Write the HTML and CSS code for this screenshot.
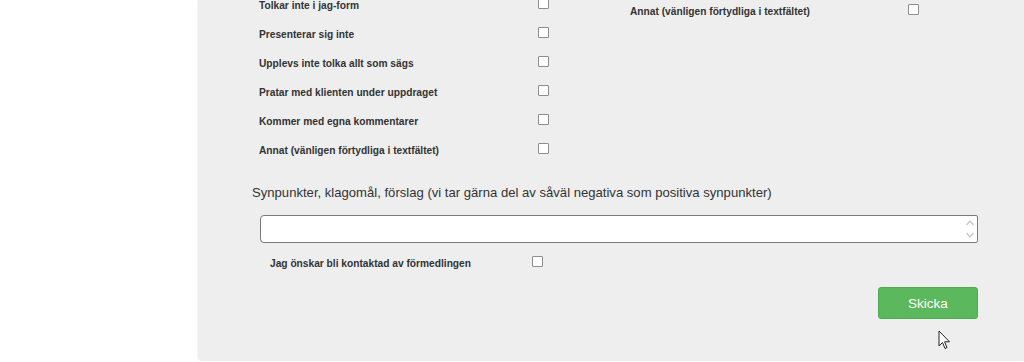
FILE: index.html
```html
<!DOCTYPE html>
<html lang="sv">
<head>
<meta charset="utf-8">
<title>Synpunkter</title>
<link rel="stylesheet" href="styles.css">
</head>
<body>
<div class="page">
  <aside class="sidebar"></aside>
  <main class="panel">
    <div class="checks">
      <div class="col col-left">
        <div class="row"><span class="lbl">Tolkar inte i jag-form</span><span class="box"></span></div>
        <div class="row"><span class="lbl">Presenterar sig inte</span><span class="box"></span></div>
        <div class="row"><span class="lbl">Upplevs inte tolka allt som sägs</span><span class="box"></span></div>
        <div class="row"><span class="lbl">Pratar med klienten under uppdraget</span><span class="box"></span></div>
        <div class="row"><span class="lbl">Kommer med egna kommentarer</span><span class="box"></span></div>
        <div class="row"><span class="lbl">Annat (vänligen förtydliga i textfältet)</span><span class="box"></span></div>
      </div>
      <div class="col col-right">
        <div class="row"><span class="lbl">Annat (vänligen förtydliga i textfältet)</span><span class="box"></span></div>
      </div>
    </div>
    <p class="field-label">Synpunkter, klagomål, förslag (vi tar gärna del av såväl negativa som positiva synpunkter)</p>
    <div class="textarea">
      <span class="ta-input"></span>
      <svg class="ta-scroll" width="10" height="22" viewBox="0 0 10 22" aria-hidden="true">
        <path d="M1.5 7 L5 3 L8.5 7" fill="none" stroke="#c4c4c4" stroke-width="1.2"/>
        <path d="M1.5 15 L5 19 L8.5 15" fill="none" stroke="#c4c4c4" stroke-width="1.2"/>
      </svg>
    </div>
    <div class="row contact"><span class="lbl">Jag önskar bli kontaktad av förmedlingen</span><span class="box"></span></div>
    <div class="actions">
      <button class="btn-send" type="button">Skicka</button>
    </div>
    <svg class="cursor" width="13" height="20" viewBox="0 0 13 20" aria-hidden="true">
      <path d="M1 1 L1 16 L4.5 12.5 L7 18.5 L9 17.6 L6.6 11.8 L11.5 11.8 Z" fill="#fff" stroke="#222" stroke-width="1" stroke-linejoin="round"/>
    </svg>
  </main>
</div>
</body>
</html>
```

FILE: styles.css
```css
* { box-sizing: border-box; }
html, body { margin: 0; padding: 0; background: #fff; }
body {
  font-family: "Liberation Sans", Arial, sans-serif;
  color: #333;
  width: 1024px;
  height: 362px;
  overflow: hidden;
}
.page {
  display: flex;
  height: 362px;
}
.sidebar {
  width: 198px;
  flex: none;
  background: #fff;
}
.panel {
  position: relative;
  flex: 1;
  height: 361px;
  background: #eeeeee;
  border-bottom-left-radius: 4px;
  box-shadow: -1px 0 1px rgba(0,0,0,0.04);
  overflow: hidden;
}
.checks {
  display: flex;
  margin-top: -10px;
  padding-left: 61px;
}
.col { width: 371px; flex: none; }
.col-right { padding-top: 6px; }
.row {
  display: flex;
  align-items: center;
  height: 29px;
}
.lbl {
  width: 279px;
  flex: none;
  font-size: 10.2px;
  font-weight: bold;
  color: #333;
  padding-top: 2px;
}
.col-right .lbl { width: 278px; }
.box {
  width: 11px;
  height: 11px;
  border: 1px solid #8d8d8d;
  border-radius: 1px;
  background: #fff;
  margin-top: -3px;
}
.field-label {
  margin: 20px 0 0 54px;
  font-size: 13.1px;
  line-height: 18px;
  color: #333;
}
.textarea {
  display: flex;
  align-items: center;
  margin: 13px 0 0 62px;
  width: 718px;
  height: 28px;
  background: #fff;
  border: 1px solid #7a7a7a;
  border-radius: 4px 2px 2px 4px;
}
.ta-input { flex: 1; }
.ta-scroll { margin-right: 2px; }
.contact {
  margin: 5px 0 0 72px;
}
.contact .lbl { width: 262px; }
.actions {
  display: flex;
  justify-content: flex-end;
  width: 780px;
  margin-top: 10px;
}
.btn-send {
  width: 100px;
  height: 32px;
  background: #5cb85c;
  color: #fff;
  border: 1px solid #4cae4c;
  border-radius: 3px;
  font-family: "Liberation Sans", Arial, sans-serif;
  font-size: 13.5px;
  padding: 0;
  cursor: pointer;
}
.cursor {
  position: absolute;
  left: 740px;
  top: 330px;
}
```
